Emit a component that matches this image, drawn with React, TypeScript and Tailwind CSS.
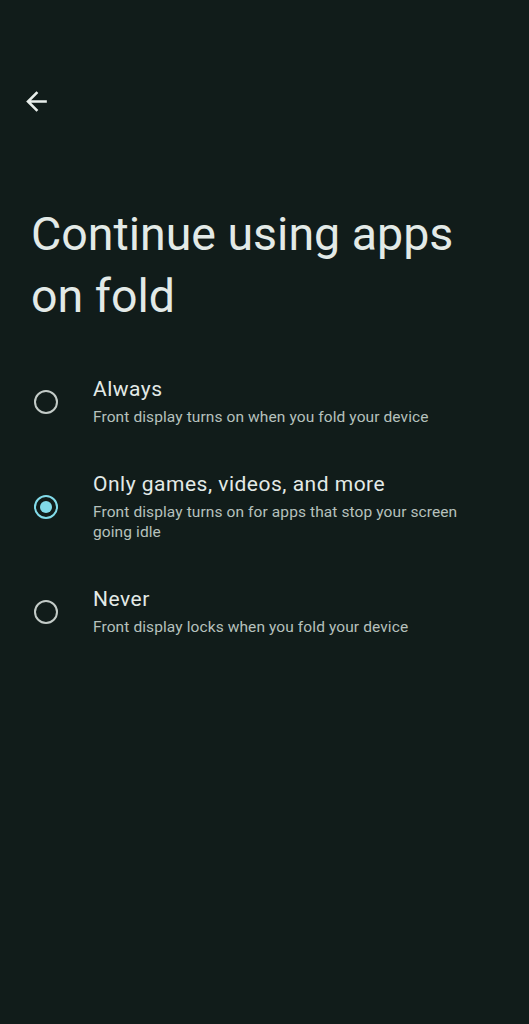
import { useState } from "react";

const options = [
  {
    id: "always",
    title: "Always",
    description: "Front display turns on when you fold your device",
  },
  {
    id: "games",
    title: "Only games, videos, and more",
    description: "Front display turns on for apps that stop your screen going idle",
  },
  {
    id: "never",
    title: "Never",
    description: "Front display locks when you fold your device",
  },
];

function Radio({ checked }: { checked: boolean }) {
  return (
    <div
      className={`w-6 h-6 rounded-full border-2 flex items-center justify-center shrink-0 ${
        checked ? "border-[#82dbe9]" : "border-[#c3cbc7]"
      }`}
    >
      {checked && <div className="w-3 h-3 rounded-full bg-[#82dbe9]" />}
    </div>
  );
}

export default function App() {
  const [selected, setSelected] = useState<string>("games");

  return (
    <div
      className="min-h-screen w-full bg-[#111c1a] text-[#e3eae7]"
      style={{ fontFamily: "Roboto, 'Noto Sans', sans-serif" }}
    >
      <div className="pt-[86px] pl-[21px]">
        <button className="block w-[31px] h-[31px]">
          <svg viewBox="0 0 24 24" className="w-[31px] h-[31px]" fill="#e8eeeb">
            <path d="M20 11H7.83l5.59-5.59L12 4l-8 8 8 8 1.41-1.41L7.83 13H20v-2z" />
          </svg>
        </button>
      </div>

      <h1 className="mt-[86px] pl-[31px] pr-8 text-[46.5px] leading-[62px] font-normal">
        Continue using apps on fold
      </h1>

      <div className="mt-[27px]">
        {options.map((o) => (
          <div
            key={o.id}
            onClick={() => setSelected(o.id)}
            className="flex items-center py-[22px] pl-[34px] pr-[60px] cursor-pointer"
          >
            <Radio checked={selected === o.id} />
            <div className="ml-[35px] flex flex-col">
              <span className="text-[21px] leading-[27px] tracking-[0.5px] text-[#e3eae7]">
                {o.title}
              </span>
              <span className="mt-1 text-[15.5px] leading-5 tracking-[0.1px] text-[#b6c1bd]">
                {o.description}
              </span>
            </div>
          </div>
        ))}
      </div>
    </div>
  );
}
